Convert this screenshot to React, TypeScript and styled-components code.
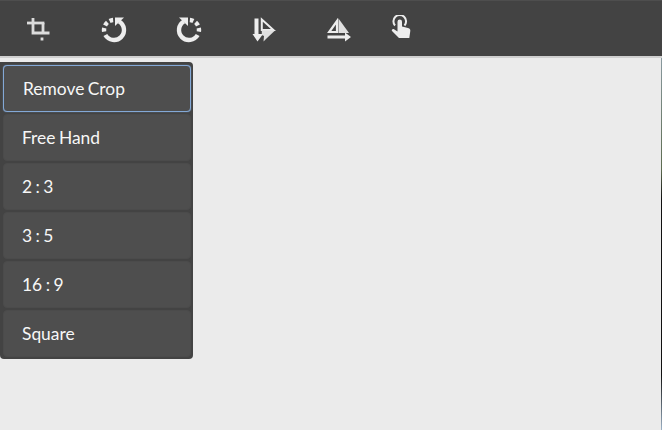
import React from "react";
import styled, { createGlobalStyle } from "styled-components";

const GlobalStyle = createGlobalStyle`
  html, body {
    margin: 0;
    padding: 0;
    height: 100%;
    overflow: hidden;
    background: #ebebeb;
  }
  #root {
    height: 100%;
  }
`;

const Page = styled.div`
  height: 430px;
  display: flex;
  flex-direction: column;
  font-family: Lato, "Open Sans", "Liberation Sans", sans-serif;
`;

const Toolbar = styled.header`
  height: 58px;
  flex: none;
  display: flex;
  padding-left: 1px;
  box-sizing: border-box;
  background: #434343;
  border-top: 1px solid #4e4e4e;
  border-bottom: 2px solid #cfcfcf;
`;

const ToolButton = styled.button<{ $narrow?: boolean }>`
  width: ${(p) => (p.$narrow ? "50px" : "75px")};
  height: 55px;
  padding: ${(p) => (p.$narrow ? "0 0 3px" : "2px 0 0")};
  border: 0;
  background: none;
  display: flex;
  align-items: center;
  justify-content: center;
  color: #ededed;
`;

const Workspace = styled.main`
  flex: 1;
  padding-top: 4px;
  background: #ebebeb;
  border-right: 1px solid #111;
  border-image: linear-gradient(
      #8a9aa0 0,
      #5d6b50 30%,
      #111 38%,
      #111 85%,
      #9fb4c8 100%
    )
    1;
`;

const Menu = styled.ul`
  width: 193px;
  box-sizing: border-box;
  margin: 0;
  padding: 3px 2px 2px 3px;
  list-style: none;
  display: flex;
  flex-direction: column;
  gap: 2px;
  background: #434343;
  border-radius: 0 4px 4px 4px;
`;

const MenuItem = styled.li<{ $active?: boolean }>`
  height: 47px;
  box-sizing: border-box;
  display: flex;
  align-items: center;
  padding: 0 0 1px ${(p) => (p.$active ? "19px" : "18px")};
  font-size: 17.4px;
  word-spacing: -1px;
  color: #f7f7f7;
  background: #4e4e4e;
  border-radius: 4px;
  border: ${(p) => (p.$active ? "1px solid #83a8d6" : "1px solid #4b4b4b")};
  box-shadow: ${(p) => (p.$active ? "0 0 1px #83a8d6" : "none")};
`;

const CropIcon = () => (
  <svg width="24" height="24" viewBox="0 0 24 24" fill="none" stroke="#dcdcdc" strokeWidth="2.8">
    <path d="M0 5H17.4" />
    <path d="M6 0V15H22.5" />
    <path d="M16 5V15" />
    <path d="M15 19.5V22.5" />
  </svg>
);

const RotateGlyph = () => (
  <g>
    <path d="M18 4.34A10 10 0 1 1 4.34 18" strokeWidth="4.4" />
    <path d="M3.15 14.74A10 10 0 0 1 12.13 3.04" strokeWidth="4.4" strokeDasharray="3.8 2.6" />
    <path d="M14 0.5H23L14 9Z" fill="currentColor" stroke="none" />
  </g>
);

const RotateLeftIcon = () => (
  <svg width="26" height="26" viewBox="0 0 26 26" fill="none" stroke="currentColor">
    <RotateGlyph />
  </svg>
);

const RotateRightIcon = () => (
  <svg width="26" height="26" viewBox="0 0 26 26" fill="none" stroke="currentColor">
    <g transform="translate(26 0) scale(-1 1)">
      <RotateGlyph />
    </g>
  </svg>
);

const FlipVerticalIcon = () => (
  <svg width="24" height="26" viewBox="0 0 24 26" fill="currentColor">
    <path d="M2.5 1.5H6.5V17H11L5.5 24.5L0.5 17H2.5Z" />
    <path d="M9.8 2.5L21.5 13H9.8Z" fill="none" stroke="currentColor" strokeWidth="2" />
    <path d="M9.8 13.5H23L14.5 21.5L11.5 24.5L12 19L9.8 18Z" fill="#e0e0e0" />
  </svg>
);

const FlipHorizontalIcon = () => (
  <svg width="26" height="24" viewBox="0 0 26 24" fill="currentColor">
    <path d="M11 3V14H3.2Z" fill="none" stroke="currentColor" strokeWidth="2.2" />
    <path d="M12.5 0.5L23 15H12.5Z" fill="#e0e0e0" />
    <path d="M1.5 17.5H19V14.5L25 19L19 23.5V20.5H1.5Z" />
  </svg>
);

const TouchIcon = () => (
  <svg width="20" height="24" viewBox="0 0 20 24" fill="none" stroke="currentColor">
    <path d="M4 10.5A6.3 6.3 0 1 1 13.5 10.5" strokeWidth="2" />
    <path
      d="M6.5 6.8A2.2 2.2 0 0 1 11 6.8V11.5L17 13C19 13.6 19.5 14.5 19.3 16L18.3 23H8L1 16C0.2 15 1.6 13.5 3 14.2L6.5 16.5Z"
      fill="currentColor"
      stroke="none"
    />
  </svg>
);

const options = ["Free Hand", "2 : 3", "3 : 5", "16 : 9", "Square"];

export default function App() {
  return (
    <Page>
      <GlobalStyle />
      <Toolbar>
        <ToolButton aria-label="Crop">
          <CropIcon />
        </ToolButton>
        <ToolButton aria-label="Rotate left">
          <RotateLeftIcon />
        </ToolButton>
        <ToolButton aria-label="Rotate right">
          <RotateRightIcon />
        </ToolButton>
        <ToolButton aria-label="Flip vertical">
          <FlipVerticalIcon />
        </ToolButton>
        <ToolButton aria-label="Flip horizontal">
          <FlipHorizontalIcon />
        </ToolButton>
        <ToolButton $narrow aria-label="Touch">
          <TouchIcon />
        </ToolButton>
      </Toolbar>
      <Workspace>
        <Menu>
          <MenuItem $active>Remove Crop</MenuItem>
          {options.map((option) => (
            <MenuItem key={option}>{option}</MenuItem>
          ))}
        </Menu>
      </Workspace>
    </Page>
  );
}
